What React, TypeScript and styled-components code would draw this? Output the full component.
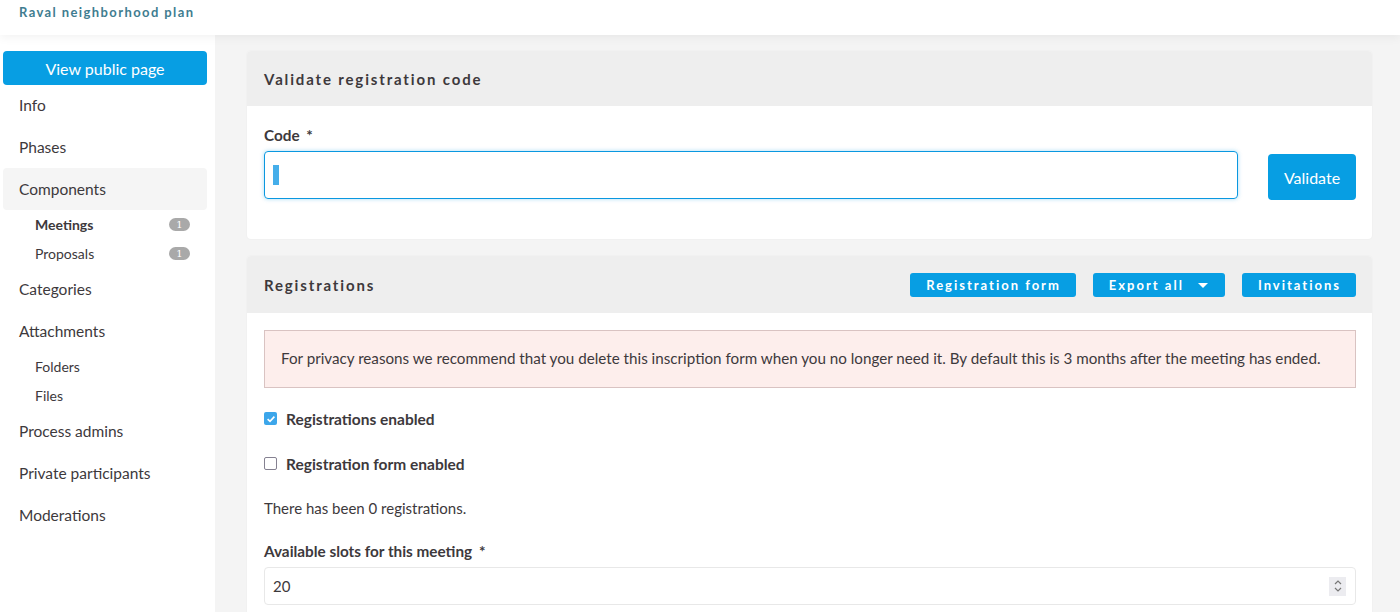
import React from 'react'
import styled, { createGlobalStyle } from 'styled-components'

const GlobalStyle = createGlobalStyle`
  html, body {
    margin: 0;
    padding: 0;
    background: #f4f4f4;
    font-family: "Lato", "Open Sans", sans-serif;
    color: #3d393c;
  }
  * { box-sizing: border-box; }
`

const primary = '#079ee3'

type NavItem = {
  label: string
  active?: boolean
  children?: { label: string; badge?: number; bold?: boolean }[]
}

const nav: NavItem[] = [
  { label: 'Info' },
  { label: 'Phases' },
  {
    label: 'Components',
    active: true,
    children: [
      { label: 'Meetings', badge: 1, bold: true },
      { label: 'Proposals', badge: 1 },
    ],
  },
  { label: 'Categories' },
  { label: 'Attachments', children: [{ label: 'Folders' }, { label: 'Files' }] },
  { label: 'Process admins' },
  { label: 'Private participants' },
  { label: 'Moderations' },
]

const App = () => {
  return (
    <>
      <GlobalStyle />
      <Page>
        <TopBar>
          <ProcessTitle>Raval neighborhood plan</ProcessTitle>
        </TopBar>
        <Body>
          <Sidebar>
            <PublicButton>View public page</PublicButton>
            <NavList>
              {nav.map((item) => (
                <li key={item.label}>
                  <NavLink $active={item.active}>{item.label}</NavLink>
                  {item.children && (
                    <SubList>
                      {item.children.map((c) => (
                        <SubLink key={c.label} $bold={c.bold}>
                          <span>{c.label}</span>
                          {c.badge !== undefined && <Badge>{c.badge}</Badge>}
                        </SubLink>
                      ))}
                    </SubList>
                  )}
                </li>
              ))}
            </NavList>
          </Sidebar>

          <Main>
            <Card>
              <CardHeader>
                <CardTitle>Validate registration code</CardTitle>
              </CardHeader>
              <CardBody>
                <FieldLabel>
                  Code <Required>*</Required>
                </FieldLabel>
                <CodeRow>
                  <FocusField>
                    <Caret />
                    <PlainInput type="text" />
                  </FocusField>
                  <ValidateButton>Validate</ValidateButton>
                </CodeRow>
              </CardBody>
            </Card>

            <Card>
              <CardHeader>
                <CardTitle>Registrations</CardTitle>
                <HeaderActions>
                  <SmallButton>Registration form</SmallButton>
                  <SmallButton>
                    Export all
                    <CaretDown />
                  </SmallButton>
                  <SmallButton>Invitations</SmallButton>
                </HeaderActions>
              </CardHeader>
              <CardBody>
                <Callout>
                  For privacy reasons we recommend that you delete this inscription form when you no longer need it. By
                  default this is 3 months after the meeting has ended.
                </Callout>
                <CheckRow>
                  <Box $checked>
                    <svg width="10" height="10" viewBox="0 0 10 10">
                      <path d="M1.6 5.2 L4 7.4 L8.4 2.6" fill="none" stroke="#fff" strokeWidth="1.6" />
                    </svg>
                  </Box>
                  Registrations enabled
                </CheckRow>
                <CheckRow>
                  <Box />
                  Registration form enabled
                </CheckRow>
                <Note>There has been 0 registrations.</Note>
                <FieldLabel>
                  Available slots for this meeting <Required>*</Required>
                </FieldLabel>
                <NumberField>
                  <PlainInput type="text" defaultValue="20" />
                  <Spinner>
                    <svg width="10" height="16" viewBox="0 0 10 16">
                      <path d="M2 6 L5 3 L8 6 M2 10 L5 13 L8 10" fill="none" stroke="#777" strokeWidth="1.2" />
                    </svg>
                  </Spinner>
                </NumberField>
              </CardBody>
            </Card>
          </Main>
        </Body>
      </Page>
    </>
  )
}

export default App

const Page = styled.div`
  min-height: 612px;
  display: flex;
  flex-direction: column;
`

const TopBar = styled.header`
  height: 35px;
  background: #fff;
  display: flex;
  align-items: center;
  padding-left: 19px;
  box-shadow: 0 2px 10px rgba(0, 0, 0, 0.06);
  position: relative;
  z-index: 2;
`

const ProcessTitle = styled.div`
  font-size: 13px;
  font-weight: 700;
  letter-spacing: 1.4px;
  color: #3f7d90;
  margin-top: -11px;
`

const Body = styled.div`
  flex: 1;
  display: flex;
`

const Sidebar = styled.aside`
  width: 215px;
  flex-shrink: 0;
  background: #fff;
  padding: 16px 8px 0 3px;
  min-height: 577px;
`

const PublicButton = styled.button`
  display: block;
  width: 204px;
  height: 34px;
  border: none;
  border-radius: 4px;
  background: ${primary};
  color: #fff;
  font-family: inherit;
  font-size: 16px;
  cursor: pointer;
`

const NavList = styled.ul`
  list-style: none;
  margin: -1px 0 0;
  padding: 0;
  width: 204px;
`

const NavLink = styled.a<{ $active?: boolean }>`
  display: flex;
  align-items: center;
  height: 42px;
  padding-left: 16px;
  font-size: 15.5px;
  color: #3d393c;
  border-radius: 4px;
  background: ${(p) => (p.$active ? '#f5f5f5' : 'transparent')};
`

const SubList = styled.ul`
  list-style: none;
  margin: 0;
  padding: 0;
`

const SubLink = styled.a<{ $bold?: boolean }>`
  display: flex;
  align-items: center;
  justify-content: space-between;
  height: 29px;
  padding: 0 17px 0 32px;
  font-size: 14px;
  font-weight: ${(p) => (p.$bold ? 700 : 400)};
  color: #3d393c;
`

const Badge = styled.span`
  display: inline-flex;
  align-items: center;
  justify-content: center;
  width: 21px;
  height: 13px;
  border-radius: 7px;
  background: #a9a9a9;
  color: #fff;
  font-size: 10px;
  font-weight: 400;
  font-family: "DejaVu Serif", serif;
`

const Main = styled.main`
  flex: 1;
  padding: 16px 28px 0 32px;
  display: flex;
  flex-direction: column;
  gap: 17px;
`

const Card = styled.section`
  background: #fff;
  border-radius: 4px;
  box-shadow: 0 0 2px rgba(0, 0, 0, 0.06);
  overflow: hidden;
`

const CardHeader = styled.div`
  background: #eeeeee;
  min-height: 55px;
  padding: 0 16px 0 17px;
  display: flex;
  align-items: center;
  justify-content: space-between;
`

const CardTitle = styled.h2`
  margin: 0;
  font-size: 15px;
  font-weight: 700;
  letter-spacing: 1.85px;
  color: #3d393c;
`

const HeaderActions = styled.div`
  display: flex;
  gap: 17px;
  padding: 17px 0 16px;
`

const SmallButton = styled.button`
  height: 24px;
  padding: 0 15px 0 16px;
  border: none;
  border-radius: 3px;
  background: ${primary};
  color: #fff;
  font-family: inherit;
  font-size: 13px;
  font-weight: 700;
  letter-spacing: 2px;
  display: inline-flex;
  align-items: center;
  cursor: pointer;
`

const CaretDown = styled.span`
  display: inline-block;
  margin-left: 14px;
  margin-right: 2px;
  width: 0;
  height: 0;
  border-left: 5px solid transparent;
  border-right: 5px solid transparent;
  border-top: 5px solid #fff;
`

const CardBody = styled.div`
  padding: 20px 16px 16px 17px;
`

const FieldLabel = styled.label`
  display: block;
  font-size: 15.3px;
  font-weight: 700;
  margin-bottom: 6px;
`

const Required = styled.span`
  margin-left: 3px;
`

const CodeRow = styled.div`
  display: flex;
  align-items: center;
  gap: 30px;
  padding-bottom: 23px;
`

const FocusField = styled.div`
  flex: 1;
  height: 48px;
  border: 1px solid #0a98e0;
  border-radius: 4px;
  box-shadow: 0 0 4px rgba(10, 152, 224, 0.35);
  display: flex;
  align-items: center;
  padding-left: 8px;
`

const Caret = styled.span`
  width: 6px;
  height: 20px;
  background: #45aeea;
  flex-shrink: 0;
`

const PlainInput = styled.input`
  flex: 1;
  border: none;
  outline: none;
  background: transparent;
  font-family: inherit;
  font-size: 15px;
  color: #3d393c;
  height: 100%;
  padding: 0;
`

const ValidateButton = styled.button`
  width: 88px;
  height: 46px;
  margin-top: 4px;
  border: none;
  border-radius: 4px;
  background: ${primary};
  color: #fff;
  font-family: inherit;
  font-size: 16px;
  cursor: pointer;
`

const Callout = styled.div`
  background: #fdeeec;
  border: 1px solid #d9c3c2;
  padding: 17px 16px 18px;
  font-size: 15.2px;
  line-height: 21px;
  color: #3d393c;
  margin-top: -3px;
  margin-bottom: 20px;
`

const CheckRow = styled.label`
  display: flex;
  align-items: center;
  gap: 9px;
  height: 21px;
  margin-bottom: 24px;
  font-size: 15.5px;
  font-weight: 700;
`

const Box = styled.span<{ $checked?: boolean }>`
  width: 13px;
  height: 13px;
  border-radius: 2px;
  display: inline-flex;
  align-items: center;
  justify-content: center;
  background: ${(p) => (p.$checked ? '#3ca6ea' : '#fff')};
  border: ${(p) => (p.$checked ? 'none' : '1.5px solid #858191')};
`

const Note = styled.p`
  margin: 0 0 23px;
  font-size: 15px;
  line-height: 21px;
`

const NumberField = styled.div`
  height: 38px;
  margin-top: 7px;
  border: 1px solid #e8e8e8;
  border-radius: 4px;
  display: flex;
  align-items: center;
  padding: 0 9px 0 8px;
`

const Spinner = styled.span`
  width: 17px;
  height: 19px;
  background: #ececf0;
  display: inline-flex;
  align-items: center;
  justify-content: center;
`
